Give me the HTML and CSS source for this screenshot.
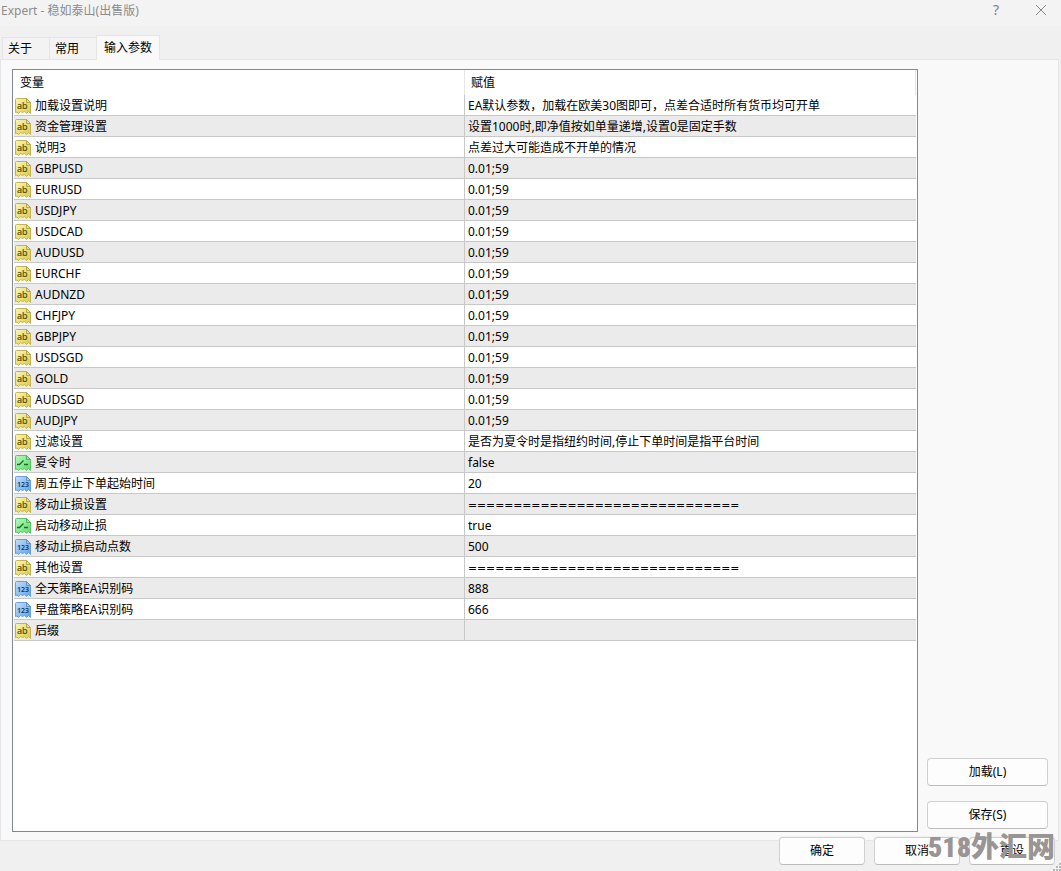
FILE: index.html
```
<!DOCTYPE html>
<html lang="zh-CN">
<head>
    <meta charset="UTF-8">
    <meta name="viewport" content="width=device-width, initial-scale=1.0">
    <title>Expert - 稳如泰山(出售版)</title>
    <link rel="stylesheet" href="styles.css">
</head>
<body>
    <!-- Icon shapes: -->
    <svg class="defs" width="0" height="0" aria-hidden="true">
        <defs>
            <linearGradient id="fill-ab" x1="0" y1="0" x2="1" y2="1">
                <stop offset="0" stop-color="#fbf6b4" />
                <stop offset="1" stop-color="#dcc94e" />
            </linearGradient>
            <linearGradient id="fill-bool" x1="0" y1="0" x2="1" y2="1">
                <stop offset="0" stop-color="#b4fbba" />
                <stop offset="1" stop-color="#5fd96c" />
            </linearGradient>
            <linearGradient id="fill-num" x1="0" y1="0" x2="1" y2="1">
                <stop offset="0" stop-color="#bfe0ff" />
                <stop offset="1" stop-color="#62a2e4" />
            </linearGradient>
            <path id="paper" d="M.5 1.5Q.5.5 1.5.5H11.5L15.5 4.5V15.500L13.500 13.500L11.500 15.500L9.500 13.500L7.500 14.500L5.500 13.500L3.500 15.500L2 14L.5 14.500Z" />
            <path id="fold" d="M11.500.5V4.500H15.500Z" />
            <symbol id="icon-ab" viewBox="0 0 16 16">
                <use href="#paper" fill="url(#fill-ab)" stroke="#c4b350" />
                <use href="#fold" fill="#e9dc86" stroke="#b9a743" />
                <text x="2" y="11" font-size="9" fill="#5c5000" stroke="#5c5000" stroke-width=".2">ab</text>
            </symbol>
            <symbol id="icon-bool" viewBox="0 0 16 16">
                <use href="#paper" fill="url(#fill-bool)" stroke="#5cc468" />
                <use href="#fold" fill="#8fe898" stroke="#4fb95b" />
                <path d="M2 9.500H4.500L8.500 5.500M9 9.500H13" fill="none" stroke="#176e25" stroke-width="1.300" />
            </symbol>
            <symbol id="icon-num" viewBox="0 0 16 16">
                <use href="#paper" fill="url(#fill-num)" stroke="#6ba0d4" />
                <use href="#fold" fill="#9cc9f3" stroke="#5f95ca" />
                <text x="2" y="11" font-size="7" font-weight="600" fill="#123a6b">123</text>
            </symbol>
        </defs>
    </svg>

    <div class="dialog">
        <header class="titlebar">
            <h1>Expert - 稳如泰山(出售版)</h1>
            <button type="button" class="caption help" aria-label="帮助">?</button>
            <button type="button" class="caption close" aria-label="关闭">
                <svg width="12" height="12" viewBox="0 0 12 12"><path d="M1 1L11 11M11 1L1 11" stroke="#8a8a8a" fill="none" /></svg>
            </button>
        </header>

        <nav class="tabs">
            <button type="button" class="tab">关于</button>
            <button type="button" class="tab">常用</button>
            <button type="button" class="tab active">输入参数</button>
        </nav>

        <main class="panel">
            <div class="list">
                <table>
                    <colgroup><col class="col-name"><col></colgroup>
                    <thead>
                        <tr><th>变量</th><th>赋值</th></tr>
                    </thead>
                    <tbody>
                        <tr><td><svg class="icon"><use href="#icon-ab" /></svg>加载设置说明</td><td>EA默认参数，加载在欧美30图即可，点差合适时所有货币均可开单</td></tr>
                        <tr><td><svg class="icon"><use href="#icon-ab" /></svg>资金管理设置</td><td>设置1000时,即净值按如单量递增,设置0是固定手数</td></tr>
                        <tr><td><svg class="icon"><use href="#icon-ab" /></svg>说明3</td><td>点差过大可能造成不开单的情况</td></tr>
                        <tr><td><svg class="icon"><use href="#icon-ab" /></svg>GBPUSD</td><td>0.01;59</td></tr>
                        <tr><td><svg class="icon"><use href="#icon-ab" /></svg>EURUSD</td><td>0.01;59</td></tr>
                        <tr><td><svg class="icon"><use href="#icon-ab" /></svg>USDJPY</td><td>0.01;59</td></tr>
                        <tr><td><svg class="icon"><use href="#icon-ab" /></svg>USDCAD</td><td>0.01;59</td></tr>
                        <tr><td><svg class="icon"><use href="#icon-ab" /></svg>AUDUSD</td><td>0.01;59</td></tr>
                        <tr><td><svg class="icon"><use href="#icon-ab" /></svg>EURCHF</td><td>0.01;59</td></tr>
                        <tr><td><svg class="icon"><use href="#icon-ab" /></svg>AUDNZD</td><td>0.01;59</td></tr>
                        <tr><td><svg class="icon"><use href="#icon-ab" /></svg>CHFJPY</td><td>0.01;59</td></tr>
                        <tr><td><svg class="icon"><use href="#icon-ab" /></svg>GBPJPY</td><td>0.01;59</td></tr>
                        <tr><td><svg class="icon"><use href="#icon-ab" /></svg>USDSGD</td><td>0.01;59</td></tr>
                        <tr><td><svg class="icon"><use href="#icon-ab" /></svg>GOLD</td><td>0.01;59</td></tr>
                        <tr><td><svg class="icon"><use href="#icon-ab" /></svg>AUDSGD</td><td>0.01;59</td></tr>
                        <tr><td><svg class="icon"><use href="#icon-ab" /></svg>AUDJPY</td><td>0.01;59</td></tr>
                        <tr><td><svg class="icon"><use href="#icon-ab" /></svg>过滤设置</td><td>是否为夏令时是指纽约时间,停止下单时间是指平台时间</td></tr>
                        <tr><td><svg class="icon"><use href="#icon-bool" /></svg>夏令时</td><td>false</td></tr>
                        <tr><td><svg class="icon"><use href="#icon-num" /></svg>周五停止下单起始时间</td><td>20</td></tr>
                        <tr><td><svg class="icon"><use href="#icon-ab" /></svg>移动止损设置</td><td class="divider">==============================</td></tr>
                        <tr><td><svg class="icon"><use href="#icon-bool" /></svg>启动移动止损</td><td>true</td></tr>
                        <tr><td><svg class="icon"><use href="#icon-num" /></svg>移动止损启动点数</td><td>500</td></tr>
                        <tr><td><svg class="icon"><use href="#icon-ab" /></svg>其他设置</td><td class="divider">==============================</td></tr>
                        <tr><td><svg class="icon"><use href="#icon-num" /></svg>全天策略EA识别码</td><td>888</td></tr>
                        <tr><td><svg class="icon"><use href="#icon-num" /></svg>早盘策略EA识别码</td><td>666</td></tr>
                        <tr><td><svg class="icon"><use href="#icon-ab" /></svg>后缀</td><td></td></tr>
                    </tbody>
                </table>
            </div>
            <aside class="side">
                <button type="button" class="btn">加载(L)</button>
                <button type="button" class="btn">保存(S)</button>
            </aside>
        </main>

        <footer class="actions">
            <button type="button" class="btn">确定</button>
            <button type="button" class="btn">取消</button>
            <button type="button" class="btn">重设</button>
        </footer>

        <div class="watermark"><span>518</span>外汇网</div>
        <svg class="grip" width="8" height="8" viewBox="0 0 8 8" fill="#b8b8b8" aria-hidden="true">
            <path d="M6 0h2v2h-2zM3 3h2v2h-2zM6 3h2v2h-2zM0 6h2v2h-2zM3 6h2v2h-2zM6 6h2v2h-2z" />
        </svg>
    </div>
</body>
</html>
```
FILE: styles.css
```
* {
    box-sizing: border-box;
}
body {
    margin: 0;
    background: #f0f0f0;
    color: #000;
    font: 12px/20px "Noto Sans", "Noto Sans CJK SC", sans-serif;
}
button {
    font: inherit;
    color: inherit;
}
.defs {
    position: absolute;
}

.dialog {
    position: relative;
    display: flex;
    flex-direction: column;
    min-height: 100vh;
}

/* Title bar */
.titlebar {
    display: flex;
    height: 26px;
    padding: 0 0 6px 1px;
    background: #f3f3f3;
}
.titlebar h1 {
    flex: 1;
    margin: 0;
    font-size: 12px;
    font-weight: normal;
    line-height: 22px;
    color: #8c8c8c;
}
.caption {
    display: flex;
    align-items: center;
    justify-content: center;
    padding: 0;
    border: 0;
    background: none;
    color: #808080;
}
.help {
    width: 48px;
    font-size: 14px;
}
.close {
    width: 41px;
}

/* Tabs */
.tabs {
    display: flex;
    align-items: flex-end;
    height: 34px;
    padding: 0 2px;
    margin-bottom: -1px;
    z-index: 1;
}
.tab {
    width: 47px;
    height: 23px;
    padding: 0 5px;
    border: 1px solid #e5e5e5;
    border-right: 0;
    background: #f3f3f3;
    text-align: left;
}
.tab.active {
    width: 64px;
    height: 25px;
    padding: 0 7px;
    border-right: 1px solid #e5e5e5;
    border-bottom: 0;
    background: #f9f9f9;
}

/* Parameter list */
.panel {
    flex: 1;
    display: flex;
    gap: 9px;
    margin-right: 2px;
    padding: 9px 10px 8px 11px;
    border: 1px solid #e5e5e5;
    background: #f9f9f9;
}
.list {
    flex: 1;
    padding: 0 1px;
    border: 1px solid #828790;
    background: #fff;
}
table {
    width: 100%;
    table-layout: fixed;
    border-collapse: separate;
    border-spacing: 0;
}
.col-name {
    width: 50%;
}
th {
    height: 25px;
    padding: 0 6px;
    border-right: 1px solid #e5e5e5;
    font-weight: normal;
    text-align: left;
}
td {
    height: 21px;
    padding: 2px 3px 0;
    border-bottom: 1px solid #c8c8c8;
    line-height: 18px;
    white-space: nowrap;
}
td:first-child {
    padding-left: 1px;
    border-right: 1px solid #c8c8c8;
}
tbody tr:nth-child(even) {
    background: #ebebeb;
}
.icon {
    width: 16px;
    height: 16px;
    margin-right: 4px;
    vertical-align: -4px;
}
.divider {
    font-family: "DejaVu Sans Condensed", "DejaVu Sans", sans-serif;
}

/* Buttons */
.btn {
    height: 28px;
    padding: 0;
    border: 1px solid #d0d0d0;
    border-bottom-color: #bcbcbc;
    border-radius: 4px;
    background: #fdfdfd;
}
.side {
    display: flex;
    flex-direction: column;
    justify-content: flex-end;
    gap: 15px;
    width: 121px;
    padding-bottom: 3px;
}
.actions {
    display: flex;
    justify-content: flex-end;
    gap: 9px;
    margin-top: -4px;
    padding: 0 6px 6px;
}
.actions .btn {
    width: 86px;
    box-shadow: 0 0 0 1px #f0f0f0;
}

.watermark {
    position: absolute;
    right: 6px;
    bottom: 3px;
    color: #999594;
    font: 900 28px/40px "Noto Sans CJK SC", sans-serif;
    pointer-events: none;
}
.watermark span {
    font-family: "Roboto Condensed", "Liberation Sans Narrow", "Liberation Sans", sans-serif;
    font-size: 28px;
}
.grip {
    position: absolute;
    right: 0;
    bottom: 0;
}
```
